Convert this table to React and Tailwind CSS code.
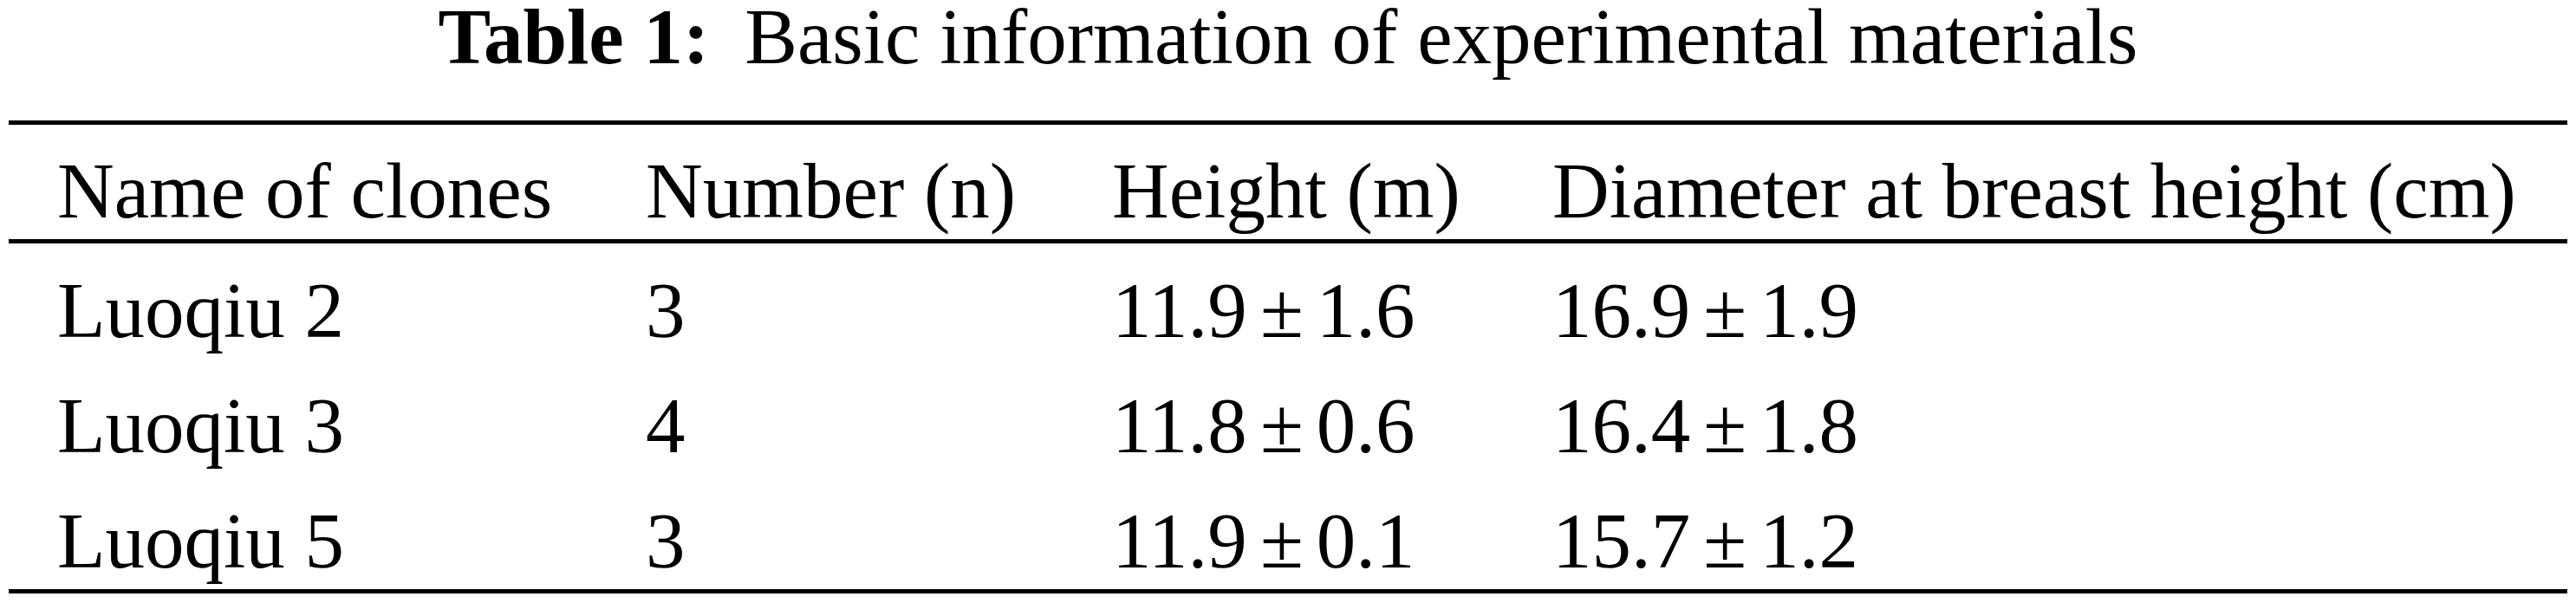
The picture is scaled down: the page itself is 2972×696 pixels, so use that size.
import React from "react";

const rows = [
  { name: "Luoqiu 2", n: "3", h: ["11.9", "1.6"], d: ["16.9", "1.9"] },
  { name: "Luoqiu 3", n: "4", h: ["11.8", "0.6"], d: ["16.4", "1.8"] },
  { name: "Luoqiu 5", n: "3", h: ["11.9", "0.1"], d: ["15.7", "1.2"] },
];

function PlusMinus({ v }) {
  return (
    <span>
      {v[0]}
      <span className="mx-[15px]">±</span>
      {v[1]}
    </span>
  );
}

export default function App() {
  return (
    <div className="w-[2972px] h-[696px] bg-white text-black font-[family-name:'Liberation_Serif','Times_New_Roman',serif] text-[91px]">
      <div className="h-[139px] leading-[85px] text-center whitespace-nowrap">
        <span className="font-bold">Table 1:</span>
        <span className="ml-[41px]">Basic information of experimental materials</span>
      </div>

      <div className="ml-[10px] w-[2952px] border-y-[5px] border-black">
        <div className="grid grid-cols-[679px_538px_508px_1227px] border-b-[5px] border-black pt-[22px] leading-[110px] whitespace-nowrap">
          <div className="pl-[56px]">Name of clones</div>
          <div className="pl-[56px]">Number (n)</div>
          <div className="pl-[56px]">Height (m)</div>
          <div className="pl-[56px]">Diameter at breast height (cm)</div>
        </div>

        {rows.map((r) => (
          <div
            key={r.name}
            className="grid grid-cols-[679px_538px_508px_1227px] pt-[22px] leading-[111px] whitespace-nowrap"
          >
            <div className="pl-[56px]">{r.name}</div>
            <div className="pl-[56px]">{r.n}</div>
            <div className="pl-[56px]">
              <PlusMinus v={r.h} />
            </div>
            <div className="pl-[56px]">
              <PlusMinus v={r.d} />
            </div>
          </div>
        ))}
      </div>
    </div>
  );
}
